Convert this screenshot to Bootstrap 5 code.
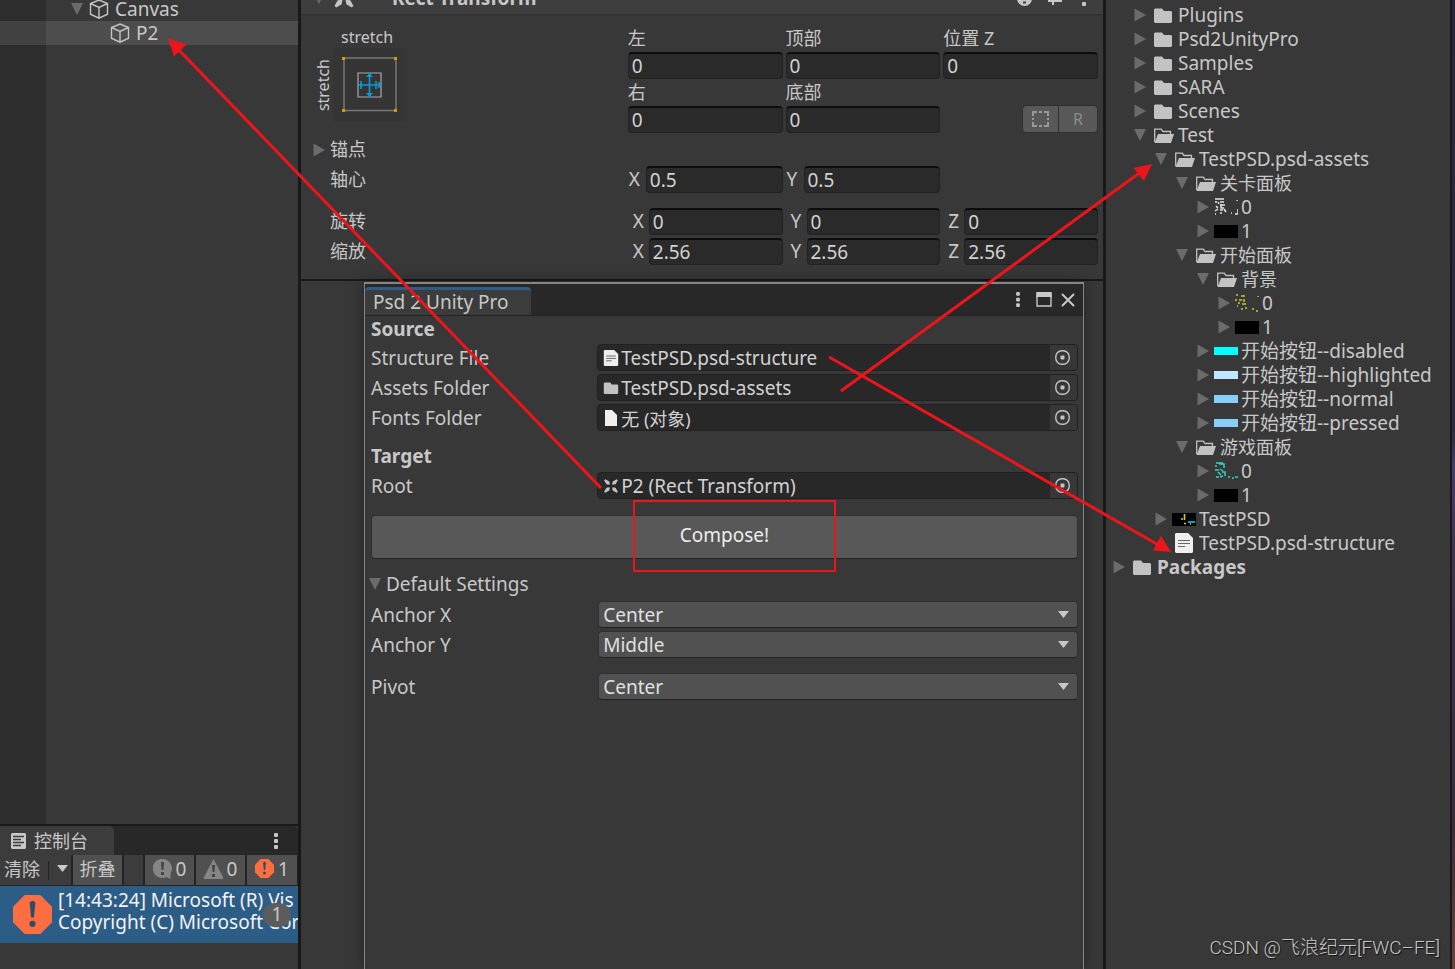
<!DOCTYPE html>
<html lang="zh-CN">
<head>
<meta charset="utf-8">
<meta name="viewport" content="width=device-width, initial-scale=1">
<title>Psd 2 Unity Pro</title>
<link href="https://cdn.jsdelivr.net/npm/bootstrap@5.3.0/dist/css/bootstrap.min.css" rel="stylesheet">
<style>
  body { background: #383838; color: #c8c8c8; font: 19px/24px "Noto Sans", "Noto Sans CJK SC", sans-serif; }
  .zh { font-size: 18px; }
  .editor { display: grid; grid-template-columns: minmax(0,298fr) minmax(0,802fr) minmax(0,344fr) 2px; column-gap: 3px; background: #191919; height: 100vh; }
  .editor > .wallpaper { margin-left: -1px; background: linear-gradient(#29243a 0, #302b40 45%, #463c6a 48%, #3d304a 60%, #392b3c 85%, #6a4238 100%); }
  .pane { background: #383838; min-width: 0; min-height: 0; overflow: hidden; }
  svg { display: block; flex: none; }
  .tri { fill: #6b6b6b; }

  /* hierarchy */
  .hierarchy { background: linear-gradient(90deg, #2d2d2d 46px, #383838 46px); overflow: hidden; }
  .hrow { height: 24px; gap: 6px; }
  .hierarchy .hrow:first-child { margin-top: -3px; padding-left: 71px; }
  .hrow.picked { background: linear-gradient(90deg, #414141 46px, #4d4d4d 46px); padding-left: 110px; }

  /* console */
  .console { border-top: 2px solid #191919; }
  .console-tabs { height: 29px; background: #282828; border-radius: 0 5px 0 0; }
  .console-tab { width: 114px; background: #3c3c3c; border-radius: 0 5px 0 0; padding-left: 11px; }
  .console-bar { height: 31px; background: #3c3c3c; border-bottom: 1px solid #232323; }
  .console-bar button { border: 0; color: #c8c8c8; background: none; padding: 0 0 3px; }
  .console-bar .lit { background: #505050; border-right: 2px solid #232323; width: 51px; }
  .console-bar .lit:last-child { border-right-width: 1px; }
  .console-bar .clear-menu { border-right: 2px solid #232323; }
  .console-bar .blank { width: 21px; border-right: 2px solid #232323; }
  .console-bar .sep { border-left: 1px solid #232323; height: 19px; }
  .log { background: #2c5d87; color: #f2f2f2; height: 57px; line-height: 22px; margin-bottom: 26px; padding-left: 13px; }
  .log-text { white-space: nowrap; overflow: hidden; padding: 0 0 7px 6px; }
  .log-count { right: 7px; top: 17px; width: 28px; height: 24px; border-radius: 12px; background: #5c5c5c; color: #c8c8c8; text-align: center; line-height: 22px; }

  /* inspector */
  .component-head { height: 15px; background: #3e3e3e; border-bottom: 1px solid #303030; overflow: hidden; }
  .component-head > div { height: 32px; padding: 0 17px 0 12px; }
  .component-head .title { padding-left: 37px; }
  .component-head .pin { margin: 0 20px 0 16px; }
  .rect-body { border-bottom: 2px solid #191919; padding: 10px 5px 14px 0; }
  .label-col { flex: 0 0 41%; }
  .rect-body label, .rect-body .name { height: 27px; line-height: 27px; }
  .rect-body .name { padding-left: 29px; }
  .rect-body .name.foldout { padding-left: 12px; gap: 5px; }
  .prow { margin-top: 3px; }
  .prow.apart { margin-top: 15px; }
  .anchor-word { font-size: 16px; line-height: 20px; }
  .anchor-word.over { padding: 2px 0 1px 40px; }
  .anchor-word.upright { writing-mode: vertical-rl; transform: rotate(180deg); }
  .numgrid { display: grid; grid-template-columns: repeat(3, minmax(0,1fr)); column-gap: 3px; }
  .numgrid .form-control { width: 100%; min-width: 0; }
  .form-control.field { height: 27px; padding: 0 3px; background: #2a2a2a; border: 1px solid #212121; border-top: 2px solid #0d0d0d; border-radius: 4px; color: #d2d2d2; font-size: 19px; line-height: 24px; }
  .axis { display: flex; }
  .axis label { flex: 0 0 18px; padding-left: 1px; }
  .spin .axis label { flex-basis: 21px; padding-left: 5px; }
  .raw-btn { height: 28px; padding: 0; border: 1px solid #303030; border-radius: 4px; background: #585858; color: #8c8c8c; }
  .raw-btn.wide { width: 40px; }

  /* floating tool window */
  .tool-window { margin: 1px 19px 0 63px; border: 1px solid #858585; border-top-width: 2px; border-bottom: 0; box-shadow: 0 0 14px rgba(0,0,0,.35); background: #383838; }
  .tool-tabs { height: 32px; background: #282828; border-bottom: 1px solid #232323; }
  .tool-tab { margin-top: 3px; width: 166px; border-top: 3px solid #2c5d87; border-radius: 4px 4px 0 0; background: #3c3c3c; padding-left: 8px; line-height: 24px; }
  .bare { border: 0; background: none; padding: 0; color: inherit; }
  .tool-body { padding: 0 5px 0 6px; }
  .tool-body h2 { font-size: 19px; line-height: 26px; font-weight: 700; margin: 0 0 2px; }
  .tool-body h2.apart { margin: 12px 0 3px; }
  .frow { display: flex; height: 27px; margin-bottom: 3px; align-items: center; }
  .frow.apart { margin-top: 15px; }
  .frow > label { flex: 0 0 32%; }
  .frow > :last-child { flex: 1 1 0; min-width: 0; }
  .objbox { height: 27px; display: flex; align-items: center; border: 1px solid #212121; border-radius: 4px; background: #282828; padding-left: 5px; overflow: hidden; }
  .objbox input { flex: 1; min-width: 0; background: none; border: 0; color: #d2d2d2; padding: 0 0 0 2px; height: 25px; outline: 0; }
  .objbox button { width: 27px; height: 25px; border: 0; background: #373737; padding: 0 0 0 5px; }
  .compose { height: 44px; margin-top: 16px; background: #585858; border: 1px solid #303030; border-bottom-color: #232323; border-radius: 4px; color: #eee; font-size: 19px; line-height: 38px; padding: 0 0 4px; }
  .settings { height: 26px; margin: 12px 0 4px -2px; gap: 5px; }
  .form-select.drop { height: 27px; padding: 0 30px 0 4px; margin: 0; color: #e0e0e0; font-size: 19px; line-height: 24px; border: 1px solid #303030; border-bottom-color: #232323; border-radius: 4px; background: #515151; }
  .drop-wrap { position: relative; padding-left: 1px; }
  .drop-wrap svg { position: absolute; right: 9px; top: 10px; pointer-events: none; }

  /* project tree */
  .tree, .tree ul { list-style: none; margin: 0; padding: 0; }
  .tree { padding: 3px 0 0 7px; }
  .tree ul { padding-left: 21px; }
  .node { display: flex; align-items: center; height: 24px; white-space: nowrap; }
  .node .fold { width: 17px; }
  .node .pic { width: 24px; margin-right: 3px; display: flex; }
  .node .pic svg.sm { margin-left: 3px; }

  .marks { position: absolute; inset: 0; width: 100%; height: 100vh; pointer-events: none; }
  .watermark { position: absolute; right: 15px; bottom: 8px; font: 300 19px/26px "Roboto", "Noto Sans CJK SC", sans-serif; color: #c8c8c8; text-shadow: 1px 1px 1px #111; }
</style>
</head>
<body class="position-relative overflow-hidden">

<svg width="0" height="0" class="position-absolute" aria-hidden="true">
  <symbol id="i-cube" viewBox="0 0 20 20"><path d="M10 1l8.500 3.500v10.700L10 19.200 1.500 15.200V4.500zM1.500 4.500L10 8.500l8.500-4M10 8.500v10.700" fill="none" stroke="#c4c4c4" stroke-width="1.400"/></symbol>
  <symbol id="i-right" viewBox="0 0 12 14"><path class="tri" d="M.5.500v13L12 7z"/></symbol>
  <symbol id="i-down" viewBox="0 0 12 12"><path class="tri" d="M0 0h12L6 12z"/></symbol>
  <symbol id="i-folder" viewBox="0 0 18 15"><path fill="#c2c2c2" d="M0 1.500L1 .500h7l2 2.500h7l1 1v10l-1 1H1l-1-1z"/></symbol>
  <symbol id="i-open" viewBox="0 0 20 15"><path d="M.7 14V1.200h6.600L9 3.500h7.500V6" fill="none" stroke="#c2c2c2" stroke-width="1.300"/><path fill="#c2c2c2" d="M4 6h16l-3 9H.500z"/></symbol>
  <symbol id="i-doc" viewBox="0 0 18 20"><path fill="#efefef" d="M1 0h12l5 5v14l-1 1H1l-1-1V1z"/><path d="M3 7.500h12M3 10.500h12M3 13.500h7" stroke="#666" stroke-width="1.200"/></symbol>
  <symbol id="i-page" viewBox="0 0 12 16"><path fill="#efefef" d="M0 0h7l5 5v11H0z"/></symbol>
  <symbol id="i-rect" viewBox="0 0 14 14"><g fill="#c4c4c4"><path d="M1 2l1-1 3.500 2 .5 2.500L5.500 6 3 5.500zM13 2l-1-1-3.500 2L8 5.500l.5.500L11 5.500zM1 12l1 1 3.500-2L6 8.500 5.500 8 3 8.500zM13 12l-1 1-3.500-2L8 8.500l.5-.5 2.500.5z"/></g></symbol>
  <symbol id="i-pick" viewBox="0 0 15 15"><rect x=".8" y=".8" width="13.400" height="13.400" rx="6" fill="none" stroke="#c4c4c4" stroke-width="1.400"/><rect x="5.500" y="5.500" width="4" height="4" rx="1" fill="#c4c4c4"/></symbol>
  <symbol id="i-dots" viewBox="0 0 4 16"><g fill="#c8c8c8"><rect width="4" height="4" rx="1"/><rect y="6" width="4" height="4" rx="1"/><rect y="12" width="4" height="4" rx="1"/></g></symbol>
  <symbol id="i-caret" viewBox="0 0 11 7"><path fill="#c8c8c8" d="M0 0h11L5.500 7z"/></symbol>
  <symbol id="i-black" viewBox="0 0 24 13"><path d="M0 0h24v13H0z"/></symbol>
  <symbol id="i-stop" viewBox="0 0 40 40"><path fill="#ff6e40" d="M12 0h16l12 12v16L28 40H12L0 28V12z"/><path fill="#2d4d68" d="M17 8q3-4 6 0l-1.500 15h-3z"/><circle cx="20" cy="29.500" r="3.200" fill="#2d4d68"/></symbol>
</svg>

<main class="editor">
  <!-- hierarchy and console -->
  <section class="pane d-flex flex-column">
    <div class="hierarchy flex-grow-1">
      <div class="hrow d-flex align-items-center"><svg width="12" height="12"><use href="#i-down"/></svg><svg width="20" height="20"><use href="#i-cube"/></svg><span>Canvas</span></div>
      <div class="hrow picked d-flex align-items-center"><svg width="20" height="20"><use href="#i-cube"/></svg><span>P2</span></div>
    </div>
    <div class="console">
      <div class="console-tabs d-flex justify-content-between align-items-center">
        <div class="console-tab d-flex align-items-center h-100">
          <svg width="15" height="16" viewBox="0 0 15 16"><path fill="#c8c8c8" d="M1 0h13l1 1v14l-1 1H1l-1-1V1z"/><path d="M2 3.500h11M2 6.500h8M2 9.500h11M2 12.500h8" stroke="#3c3c3c" stroke-width="1.400"/></svg>
          <span class="ps-2 zh">控制台</span>
        </div>
        <button class="bare me-3 pe-1" aria-label="菜单"><svg width="4" height="16"><use href="#i-dots"/></svg></button>
      </div>
      <div class="console-bar d-flex align-items-center">
        <button class="ps-1 pe-2 zh">清除</button>
        <span class="sep"></span>
        <button class="clear-menu h-100 ps-2 flex-grow-1" aria-label="清除选项"><svg width="11" height="7"><use href="#i-caret"/></svg></button>
        <button class="lit h-100 zh">折叠</button>
        <span class="blank h-100 flex-shrink-0"></span>
        <button class="lit h-100 d-flex align-items-center justify-content-center gap-1"><svg width="19" height="20" viewBox="0 0 19 20"><path fill="#858585" d="M9.500 0a9.500 9.500 0 0 1 8 14.500V20l-4-2A9.500 9.500 0 1 1 9.500 0z"/><path fill="#444" d="M8 3h3l-.5 8h-2zM8 13h3v3H8z"/></svg>0</button>
        <button class="lit h-100 d-flex align-items-center justify-content-center gap-1"><svg width="19" height="20" viewBox="0 0 19 20"><path fill="#858585" d="M9.500 0L19 18v2H0v-2z"/><path fill="#444" d="M8 6h3l-.5 7h-2zM8 15h3v3H8z"/></svg>0</button>
        <button class="lit h-100 d-flex align-items-center justify-content-center gap-1"><svg width="19" height="19"><use href="#i-stop"/></svg>1</button>
      </div>
      <div class="log d-flex align-items-center position-relative">
        <svg width="39" height="39"><use href="#i-stop"/></svg>
        <div class="log-text">[14:43:24] Microsoft (R) Vis<br>Copyright (C) Microsoft Cor</div>
        <span class="log-count position-absolute">1</span>
      </div>
    </div>
  </section>

  <!-- inspector -->
  <section class="pane d-flex flex-column">
    <div class="component-head d-flex flex-column justify-content-end">
      <div class="d-flex align-items-center flex-shrink-0 fw-bold">
        <svg width="12" height="12"><use href="#i-down"/></svg>
        <svg class="ms-2" width="22" height="22"><use href="#i-rect"/></svg>
        <span class="title me-auto">Rect Transform</span>
        <svg width="15" height="15" viewBox="0 0 15 15"><circle cx="7.500" cy="7.500" r="7.500" fill="#c8c8c8"/><path fill="#3e3e3e" d="M6 6h3v3H6zM6 10.500h3v2H6z"/></svg>
        <svg class="pin" width="14" height="14" viewBox="0 0 14 14"><path d="M0 10h14M5 6v8" stroke="#c8c8c8" stroke-width="2"/></svg>
        <svg width="4" height="16"><use href="#i-dots"/></svg>
      </div>
    </div>

    <form class="rect-body">
      <div class="d-flex">
        <div class="label-col d-flex flex-column">
          <span class="anchor-word over">stretch</span>
          <div class="d-flex align-items-center ps-2 ms-1">
            <span class="anchor-word upright">stretch</span>
            <svg width="73" height="74" viewBox="0 0 73 74"><path fill="#353535" d="M0 0h73v74H0z"/><path d="M11 10h52v52.500H11z" fill="none" stroke="#777" stroke-width="1.500"/><path d="M25 25h23v24H25z" fill="none" stroke="#aaa" stroke-width="1.200"/><path d="M25 37h23M36.500 25v24M28 33v8M43 33v8M46 34v6" stroke="#0a9ad7" stroke-width="1.600"/><path fill="#0a9ad7" d="M33 29h7l-3.500-4zM33 45h7l-3.500 4zM29 34v6l-3-3z"/><path fill="#d29b0a" d="M9 9h3v3H9zM61 9h3v3h-3zM9 61h3v3H9zM61 61h3v3h-3z"/></svg>
          </div>
        </div>
        <div class="numgrid flex-grow-1">
          <div><label for="l" class="d-block zh">左</label><input id="l" class="form-control field" value="0"></div>
          <div><label for="t" class="d-block zh">顶部</label><input id="t" class="form-control field" value="0"></div>
          <div><label for="z" class="d-block zh">位置 Z</label><input id="z" class="form-control field" value="0"></div>
          <div><label for="r" class="d-block zh">右</label><input id="r" class="form-control field" value="0"></div>
          <div><label for="b" class="d-block zh">底部</label><input id="b" class="form-control field" value="0"></div>
          <div class="d-flex justify-content-end align-items-end btn-group">
            <button type="button" class="raw-btn btn flex-grow-0" aria-label="蓝图模式"><svg class="mx-2" width="19" height="18" viewBox="0 0 19 18"><path d="M2 6V2h4M13 2h4v4M17 12v4h-4M6 16H2v-4M8 2h3M8 16h3M2 8v2M17 8v2" fill="none" stroke="#999" stroke-width="2"/></svg></button>
            <button type="button" class="raw-btn wide btn flex-grow-0">R</button>
          </div>
        </div>
      </div>
      <div class="prow name foldout d-flex align-items-center zh"><svg width="12" height="14"><use href="#i-right"/></svg>锚点</div>
      <div class="prow d-flex">
        <div class="name label-col zh">轴心</div>
        <div class="numgrid flex-grow-1">
          <div class="axis"><label for="px">X</label><input id="px" class="form-control field" value="0.5"></div>
          <div class="axis"><label for="py">Y</label><input id="py" class="form-control field" value="0.5"></div>
        </div>
      </div>
      <div class="prow apart d-flex">
        <div class="name label-col zh">旋转</div>
        <div class="numgrid spin flex-grow-1">
          <div class="axis"><label for="rx">X</label><input id="rx" class="form-control field" value="0"></div>
          <div class="axis"><label for="ry">Y</label><input id="ry" class="form-control field" value="0"></div>
          <div class="axis"><label for="rz">Z</label><input id="rz" class="form-control field" value="0"></div>
        </div>
      </div>
      <div class="prow d-flex">
        <div class="name label-col zh">缩放</div>
        <div class="numgrid spin flex-grow-1">
          <div class="axis"><label for="sx">X</label><input id="sx" class="form-control field" value="2.56"></div>
          <div class="axis"><label for="sy">Y</label><input id="sy" class="form-control field" value="2.56"></div>
          <div class="axis"><label for="sz">Z</label><input id="sz" class="form-control field" value="2.56"></div>
        </div>
      </div>
    </form>

    <div class="tool-window flex-grow-1">
      <div class="tool-tabs d-flex">
        <div class="tool-tab me-auto">Psd 2 Unity Pro</div>
        <div class="d-flex align-items-center pe-2">
          <button class="bare" aria-label="菜单"><svg width="4" height="15"><use href="#i-dots"/></svg></button>
          <button class="bare ms-3 me-2" aria-label="最大化"><svg width="17" height="15" viewBox="0 0 17 15"><path d="M1 1h14v13H1z" fill="none" stroke="#c8c8c8" stroke-width="1.400"/><path fill="#c8c8c8" d="M.5 0h15v5H.500z"/></svg></button>
          <button class="bare" aria-label="关闭"><svg width="14" height="14" viewBox="0 0 14 14"><path d="M1 1l12 12M13 1L1 13" stroke="#c8c8c8" stroke-width="2"/></svg></button>
        </div>
      </div>
      <form class="tool-body">
        <h2>Source</h2>
        <div class="frow"><label for="sf">Structure File</label>
          <div class="objbox"><svg width="16" height="16"><use href="#i-doc"/></svg><input id="sf" value="TestPSD.psd-structure"><button type="button" aria-label="选择"><svg width="15" height="15"><use href="#i-pick"/></svg></button></div></div>
        <div class="frow"><label for="af">Assets Folder</label>
          <div class="objbox"><svg width="16" height="12"><use href="#i-folder"/></svg><input id="af" value="TestPSD.psd-assets"><button type="button" aria-label="选择"><svg width="15" height="15"><use href="#i-pick"/></svg></button></div></div>
        <div class="frow"><label for="ff">Fonts Folder</label>
          <div class="objbox"><svg width="16" height="16"><use href="#i-page"/></svg><input id="ff" class="zh" value="无 (对象)"><button type="button" aria-label="选择"><svg width="15" height="15"><use href="#i-pick"/></svg></button></div></div>
        <h2 class="apart">Target</h2>
        <div class="frow"><label for="rt">Root</label>
          <div class="objbox"><svg width="16" height="16"><use href="#i-rect"/></svg><input id="rt" value="P2 (Rect Transform)"><button type="button" aria-label="选择"><svg width="15" height="15"><use href="#i-pick"/></svg></button></div></div>
        <button type="button" class="btn compose d-block w-100">Compose!</button>
        <div class="d-flex align-items-center settings"><svg width="12" height="12"><use href="#i-down"/></svg><span>Default Settings</span></div>
        <div class="frow"><label for="ax">Anchor X</label><div class="drop-wrap"><select id="ax" class="form-select drop"><option>Center</option></select><svg width="11" height="7"><use href="#i-caret"/></svg></div></div>
        <div class="frow"><label for="ay">Anchor Y</label><div class="drop-wrap"><select id="ay" class="form-select drop"><option>Middle</option></select><svg width="11" height="7"><use href="#i-caret"/></svg></div></div>
        <div class="frow apart"><label for="pv">Pivot</label><div class="drop-wrap"><select id="pv" class="form-select drop"><option>Center</option></select><svg width="11" height="7"><use href="#i-caret"/></svg></div></div>
      </form>
    </div>
  </section>

  <!-- project tree -->
  <section class="pane">
    <ul class="tree" id="tree"></ul>
  </section>
  <div class="wallpaper"></div>
</main>

<svg class="marks" viewBox="0 0 1455 969" preserveAspectRatio="none" aria-hidden="true">
  <g stroke="#ed151c" stroke-width="3" fill="none">
    <path d="M601 488L177 48M841 391l301-220M829 357l333 190"/>
    <path d="M634 501h201v70H634z" stroke-width="2"/>
  </g>
  <g fill="#ed151c"><path d="M168 38l18.500 6.500-12.500 12zM1152 164l-18.500 4 10.500 13zM1171 552l-10-16.500-8 15z"/></g>
</svg>
<div class="watermark">CSDN @飞浪纪元[FWC–FE]</div>

<script src="https://cdn.jsdelivr.net/npm/bootstrap@5.3.0/dist/js/bootstrap.bundle.min.js"></script>
<script>
  const use = (id, w, h, c = '') => `<svg class="${c}" width="${w}" height="${h}"><use href="#${id}"/></svg>`;
  const bar = c => `<svg width="24" height="8"><rect width="24" height="8" fill="${c}"/></svg>`;
  const specks = (c, d) => `<svg width="24" height="18" viewBox="0 0 24 18"><path d="${d}" stroke="${c}" stroke-width="1.500" fill="none"/></svg>`;
  const pics = {
    folder: use('i-folder', 18, 15, 'sm'), open: use('i-open', 20, 15, 'sm'), doc: use('i-doc', 18, 20, 'sm'), black: use('i-black', 24, 13),
    white: specks('#e4e4e4', 'M1 1h9M1 4h2m1 0l1 2m1-2h4M6 7h5M2 8l2 2m3-4v4h3M1 13l3-2M1 16h1M6 12h3M6 15h2M10 11l2 3M17 15h1M21 16h3v-5M23 2v1'),
    yellow: specks('#c9c832', 'M1 1h2M6 2h4M1 5v2M4 6h3M9 5v3M3 9h2M7 10h4M2 12h1M6 15h2M11 13v2M17 15h2M21 17h2M23 2v1'),
    teal: specks('#35cfc9', 'M2 1h7M1 4h2m2-2h5v4M1 8h4m1-1l3 2M4 10l3 3M8 10h3v4M2 15h3M6 15l3-1M14 15h2M18 16h2M21 15h3'),
    psd: `<svg width="24" height="13" viewBox="0 0 24 13"><path d="M0 0h24v13H0z"/><path d="M12.500 1v6M12 10.500h2M9 6h2M18 11h1" stroke="#d8d000" stroke-width="1.600"/><path d="M16 9h7" stroke="#00cfe0" stroke-width="1.600"/></svg>`,
    cyan: bar('#00ffff'), pale: bar('#bfe6ff'), sky: bar('#87cefa')
  };
  const data = [
    ['Assets', 'root', [
      ['Plugins', 'folder'], ['Psd2UnityPro', 'folder'], ['Samples', 'folder'], ['SARA', 'folder'], ['Scenes', 'folder'],
      ['Test', 'open', [
        ['TestPSD.psd-assets', 'open', [
          ['关卡面板', 'open', [['0', 'white'], ['1', 'black']]],
          ['开始面板', 'open', [
            ['背景', 'open', [['0', 'yellow'], ['1', 'black']]],
            ['开始按钮--disabled', 'cyan'], ['开始按钮--highlighted', 'pale'], ['开始按钮--normal', 'sky'], ['开始按钮--pressed', 'sky']]],
          ['游戏面板', 'open', [['0', 'teal'], ['1', 'black']]]]],
        ['TestPSD', 'psd'], ['TestPSD.psd-structure', 'doc']]]]],
    ['Packages', 'folder']
  ];
  const draw = ([name, pic, kids]) => {
    const list = kids ? `<ul>${kids.map(draw).join('')}</ul>` : '';
    if (pic === 'root') return `<li>${list}</li>`;
    const fold = pic === 'doc' ? '' : kids ? use('i-down', 12, 12) : use('i-right', 12, 14);
    const type = name === 'Packages' ? ' fw-bold' : /^[^ -~]+$/.test(name) ? ' zh' : '';
    return `<li><div class="node${type}"><span class="fold">${fold}</span><span class="pic">${pics[pic]}</span><span>${name}</span></div>${list}</li>`;
  };
  document.getElementById('tree').innerHTML = data.map(draw).join('');
</script>
</body>
</html>
